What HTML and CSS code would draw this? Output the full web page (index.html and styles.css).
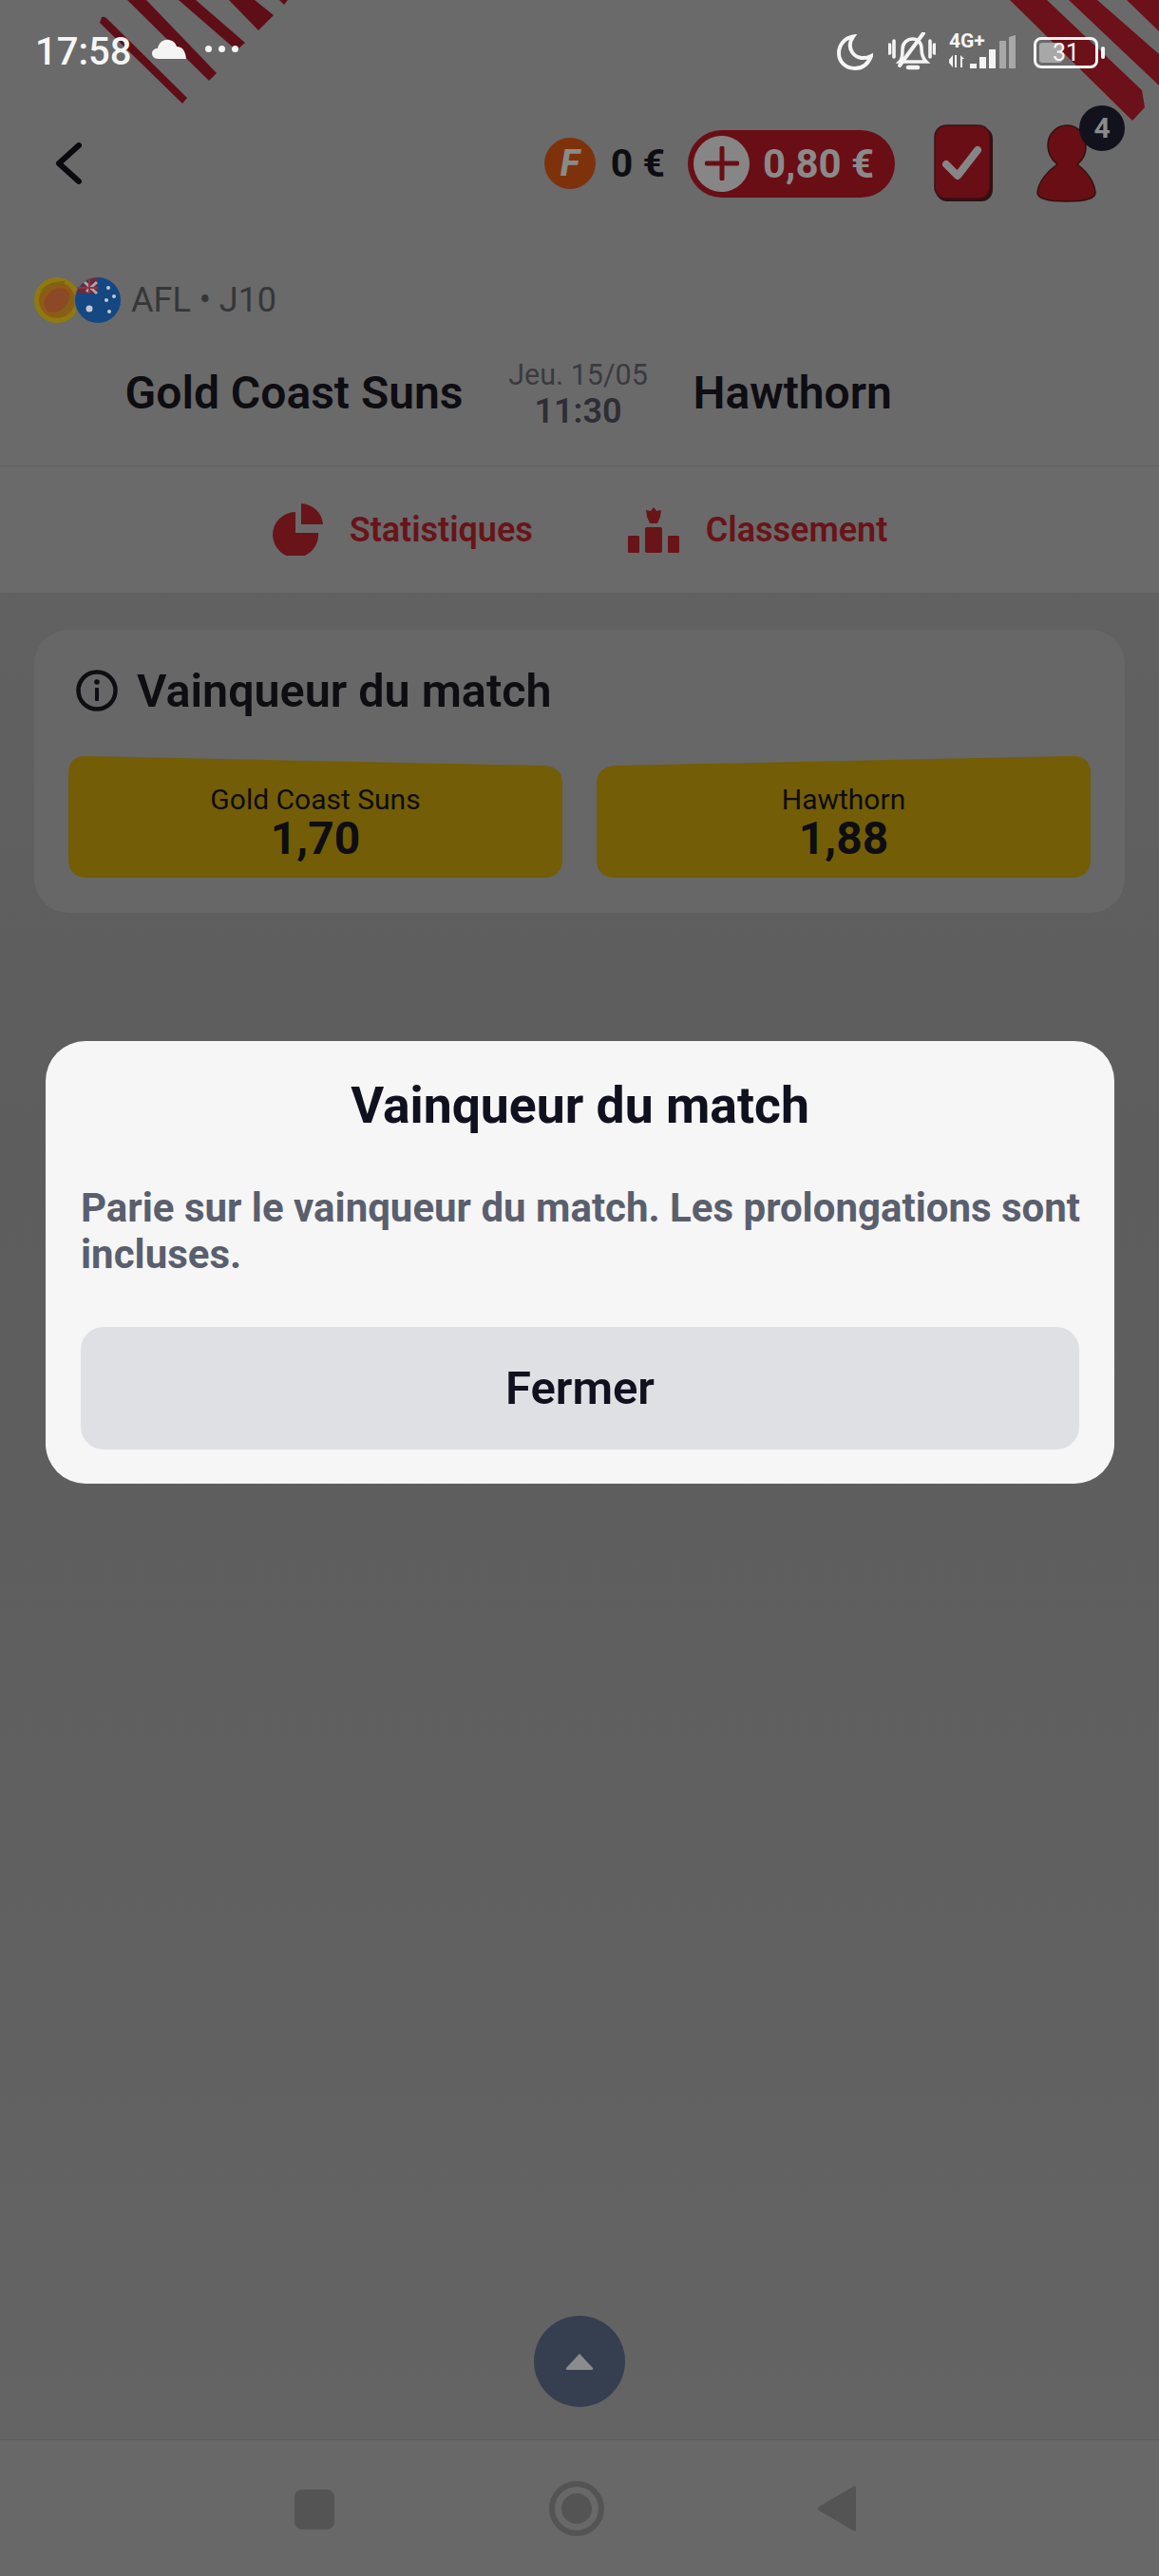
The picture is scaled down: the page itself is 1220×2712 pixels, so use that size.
FILE: index.html
```html
<!DOCTYPE html>
<html lang="fr">
<head>
<meta charset="utf-8">
<title>Gold Coast Suns - Hawthorn</title>
<link rel="stylesheet" href="styles.css">
</head>
<body>
<div class="screen">
  <!-- decorative corner ribbons behind the status bar -->
  <svg class="ribbons" width="1220" height="130" viewBox="0 0 1220 130">
    <g fill="#5e0e16">
      <path d="M107 18 Q110 17 113 20 L197 103 L192 109 L105 24 Z"/>
      <path d="M134 0H154L228 77L220 85Z"/>
      <path d="M188 0H206L258 45L249 53Z"/>
      <path d="M241 0H268L288 16L272 32Z"/>
      <path d="M294 0H303L299 5Z"/>
    </g>
    <g fill="#6c1019">
      <path d="M1063 0H1102L1202 95L1205 113L1192 127Z"/>
      <path d="M1125 0H1155L1220 57V90Z"/>
      <path d="M1186 0H1220V33Z"/>
    </g>
  </svg>

  <header class="status">
    <div class="status-left">
      <span class="clock">17:58</span>
      <svg class="cloud" width="36" height="22" viewBox="0 0 36 22"><path fill="#f4f4f4" d="M7 22C2 22 0 19 0 16C0 13 3 11 6 11C7 5 12 1 18 2C23 3 25 6 26 9C31 9 35 12 36 22Z"/></svg>
      <span class="dots"><i></i><i></i><i></i></span>
    </div>
    <div class="status-right">
      <svg class="moon" width="38" height="38" viewBox="0 0 38 38"><path fill="none" stroke="#f6f6f6" stroke-width="4" d="M17 2.5C8 4 2 11 2 20C2 29 9 36 19 36C27 36 33 31 36 23C28 27 20 25 16 19C13 14 13 8 17 2.5Z"/></svg>
      <svg class="bell" width="50" height="42" viewBox="0 0 50 42"><g fill="none" stroke="#f4f4f4" stroke-width="3.600" stroke-linecap="round"><path d="M1.500 13V22M6 9V26M44 9V26M48.500 13V22"/><path d="M13 30C15 27 15 22 15 18C15 11 20 7 26 7C31 7 35 11 35 17C35 23 36 27 40 31H12Z"/><path d="M37 1L12 35" stroke-width="4"/><path d="M21 37H31" stroke-width="4.500"/></g></svg>
      <div class="net">
        <span class="net-label">4G+</span>
        <svg width="74" height="36" viewBox="0 0 74 36" class="bars">
          <g fill="#f4f4f4">
            <path d="M0 26L4 21V34L0 29ZM6 21H8V34H6ZM12 21L16 25H14V34H12Z"/>
            <rect x="22" y="30" width="7" height="5"/>
            <rect x="32" y="23" width="7" height="12"/>
            <path d="M42 15H49V35H42Z"/>
          </g>
          <rect x="53" y="6" width="7" height="29" fill="#a8a8a8"/>
          <path d="M63 2L70 0V35H63Z" fill="#a8a8a8"/>
        </svg>
      </div>
      <div class="battery">
        <span class="battery-level"></span>
        <span class="battery-text">31</span>
      </div>
      <span class="battery-tip"></span>
    </div>
  </header>

  <div class="toolbar">
    <svg class="back" width="28" height="44" viewBox="0 0 28 44"><path d="M25 3L4 22L25 41" fill="none" stroke="#0a0a0e" stroke-width="6" stroke-linecap="round" stroke-linejoin="round"/></svg>
    <div class="wallet">
      <span class="coin">F</span>
      <span class="balance">0 €</span>
      <div class="topup">
        <span class="topup-plus"><svg width="36" height="36" viewBox="0 0 36 36"><path d="M18 2V34M2 18H34" stroke="#690e15" stroke-width="5" stroke-linecap="round"/></svg></span>
        <span class="topup-amount">0,80 €</span>
      </div>
      <svg class="bets" width="64" height="82" viewBox="0 0 64 82">
        <rect x="2" y="3" width="60" height="78" rx="12" fill="#2e1114"/>
        <rect x="1" y="1" width="58" height="77" rx="12" fill="#690e15" stroke="#3a1216" stroke-width="1.500"/>
        <path d="M13 42L25 54L46 27" fill="none" stroke="#868686" stroke-width="8" stroke-linecap="round" stroke-linejoin="round"/>
      </svg>
      <div class="account">
        <svg width="64" height="82" viewBox="0 0 64 82">
          <path fill="#690e15" stroke="#34110f" stroke-width="1.500" d="M32 1C21 1 12 10 12 22C12 32 17 38 22 42C12 49 2 60 1 72C1 78 14 81 32 81C50 81 62 78 62 72C61 60 52 49 43 42C48 38 53 31 52 20C51 9 43 1 32 1Z"/>
        </svg>
        <span class="badge">4</span>
      </div>
    </div>
  </div>

  <div class="league">
    <span class="league-flags">
      <svg width="92" height="48" viewBox="0 0 92 48">
        <circle cx="24" cy="24" r="24" fill="#8f7a0e"/>
        <circle cx="24" cy="24" r="19" fill="#8f5a18"/>
        <ellipse cx="24" cy="24" rx="15" ry="11" fill="#8d4826" transform="rotate(-40 24 24)"/>
        <path d="M8 14Q20 6 32 5M40 18Q36 34 22 41" fill="none" stroke="#7a6614" stroke-width="3"/>
        <circle cx="67" cy="24" r="25" fill="#6a6a6a"/>
        <circle cx="67" cy="24" r="24" fill="#154782"/>
        <path d="M45 17H67V0Q50 2 45 17Z" fill="#6d2a3c"/>
        <path d="M53 5L66 17M66 5L55 15" stroke="#a7a7b0" stroke-width="3"/>
        <path d="M45 11H67M58 1V17" stroke="#8a3a40" stroke-width="2"/>
        <g fill="#c4c7d0"><circle cx="58" cy="33" r="3.500"/><circle cx="78" cy="11" r="2"/><circle cx="84" cy="20" r="2"/><circle cx="76" cy="24" r="2"/><circle cx="79" cy="36" r="2"/></g>
      </svg>
    </span>
    <span class="league-name">AFL • J10</span>
  </div>

  <div class="teams">
    <span class="team team-home">Gold Coast Suns</span>
    <div class="kickoff">
      <span class="kickoff-date">Jeu. 15/05</span>
      <span class="kickoff-time">11:30</span>
    </div>
    <span class="team">Hawthorn</span>
  </div>

  <nav class="tabs">
    <a class="tab">
      <svg width="54" height="55" viewBox="0 0 54 55"><path fill="#681419" d="M25 31V9A24 24 0 1 0 49 31Z"/><path fill="#681419" d="M31 0C44 1 53 10 54 22H31Z"/></svg>
      <span>Statistiques</span>
    </a>
    <a class="tab">
      <svg width="54" height="48" viewBox="0 0 54 48"><g fill="#681419"><path d="M27 0L30 4L35 3L34 10L31 17H23L20 10L19 3L24 4Z"/><rect x="18" y="21" width="18" height="27" rx="2"/><rect x="0" y="30" width="12" height="18" rx="1"/><rect x="42" y="30" width="12" height="18" rx="1"/></g></svg>
      <span>Classement</span>
    </a>
  </nav>

  <main class="content">
    <section class="market">
      <h2 class="market-title">
        <svg width="44" height="44" viewBox="0 0 44 44"><circle cx="22" cy="22" r="19.500" fill="none" stroke="#0d0d12" stroke-width="4.500"/><circle cx="22" cy="13" r="2.800" fill="#0d0d12"/><rect x="20" y="19" width="4" height="14" rx="1" fill="#0d0d12"/></svg>
        <span>Vainqueur du match</span>
      </h2>
      <div class="odds">
        <div class="odd odd-home"><span class="odd-label">Gold Coast Suns</span><span class="odd-value">1,70</span></div>
        <div class="odd odd-away"><span class="odd-label">Hawthorn</span><span class="odd-value">1,88</span></div>
      </div>
    </section>
  </main>

  <div class="scroll-top"><svg width="30" height="18" viewBox="0 0 30 18"><path fill="#8c8c8c" d="M15 1L29 16Q30 18 27 18H3Q0 18 1 16Z"/></svg></div>

  <footer class="sysnav">
    <span class="sys-square"></span>
    <span class="sys-home"></span>
    <svg class="sys-back" width="40" height="48" viewBox="0 0 40 48"><path fill="#545454" d="M40 2V46Q40 49 37 47L1 26Q-1 24 1 22L37 1Q40 -1 40 2Z"/></svg>
  </footer>

  <div class="modal">
    <h3 class="modal-title">Vainqueur du match</h3>
    <p class="modal-text">Parie sur le vainqueur du match. Les prolongations sont incluses.</p>
    <button class="modal-close">Fermer</button>
  </div>
</div>
</body>
</html>
```
FILE: styles.css
```css
* { box-sizing: border-box; }

html, body { margin: 0; padding: 0; }

body {
  font-family: "Roboto", "Liberation Sans", sans-serif;
  color: #0d0d12;
  background: #5e5e5e;
}

.screen {
  position: relative;
  display: flex;
  flex-direction: column;
  width: 1220px;
  height: 2712px;
  overflow: hidden;
  background: #6a6a6a;
}

.ribbons {
  position: absolute;
  top: 0;
  left: 0;
}

/* status bar */
.status {
  position: relative;
  display: flex;
  justify-content: space-between;
  align-items: center;
  height: 110px;
  padding: 0 57px 0 37px;
  color: #f6f6f6;
}

.status-left,
.status-right {
  display: flex;
  align-items: center;
}

.clock {
  font-size: 40px;
  font-weight: 500;
  line-height: 46px;
}

.cloud { margin: -8px 0 0 22px; }

.dots {
  display: flex;
  gap: 7px;
  margin: -7px 0 0 20px;
}

.dots i {
  width: 7px;
  height: 7px;
  border-radius: 50%;
  background: #f6f6f6;
}

.moon { margin-right: 16px; }

.bell { margin-right: 14px; }

.net {
  position: relative;
  width: 74px;
  height: 38px;
  margin-right: 15px;
}

.net-label {
  position: absolute;
  top: -3px;
  left: 0;
  font-size: 21px;
  font-weight: 700;
  line-height: 20px;
}

.bars {
  position: absolute;
  top: 1px;
  left: 0;
}

.battery {
  position: relative;
  display: flex;
  justify-content: center;
  align-items: center;
  width: 68px;
  height: 33px;
  border: 3px solid #f4f4f4;
  border-radius: 8px;
}

.battery-level {
  position: absolute;
  top: 3px;
  bottom: 3px;
  left: 3px;
  width: 24px;
  border-radius: 3px;
  background: #a8a8a8;
}

.battery-text {
  position: relative;
  font-size: 25px;
  line-height: 27px;
}

.battery-tip {
  width: 4px;
  height: 13px;
  margin-left: 3px;
  border-radius: 2px;
  background: #f4f4f4;
}

/* top toolbar */
.toolbar {
  position: relative;
  display: flex;
  justify-content: space-between;
  align-items: center;
  height: 124px;
  padding: 0 65px 0 58px;
}

.wallet {
  display: flex;
  align-items: center;
}

.coin {
  width: 54px;
  height: 54px;
  border-radius: 50%;
  background: #7e320c;
  color: #8a8a8a;
  font-size: 38px;
  font-style: italic;
  font-weight: 800;
  line-height: 54px;
  text-align: center;
}

.balance {
  margin: 0 24px 0 16px;
  font-size: 41px;
  font-weight: 700;
}

.topup {
  display: flex;
  align-items: center;
  width: 218px;
  height: 71px;
  padding-left: 6px;
  border-radius: 36px;
  background: #690e15;
}

.topup-plus {
  display: flex;
  justify-content: center;
  align-items: center;
  width: 59px;
  height: 59px;
  border-radius: 50%;
  background: #868686;
}

.topup-amount {
  margin-left: 14px;
  color: #8a8a8a;
  font-size: 42px;
  font-weight: 700;
}

.bets { margin-left: 41px; }

.account {
  position: relative;
  height: 82px;
  margin-left: 44px;
}

.badge {
  position: absolute;
  top: -20px;
  right: -29px;
  width: 48px;
  height: 48px;
  border-radius: 50%;
  background: #11121c;
  color: #8a8a8a;
  font-size: 30px;
  font-weight: 700;
  line-height: 48px;
  text-align: center;
}

/* match header */
.league {
  display: flex;
  align-items: center;
  gap: 10px;
  height: 48px;
  margin-top: 58px;
  padding-left: 36px;
}

.league-flags { display: flex; }

.league-name {
  color: #363639;
  font-size: 36px;
}

.teams {
  display: grid;
  grid-template-columns: 1fr auto 1fr;
  gap: 49px;
  align-items: center;
  height: 76px;
  margin-top: 36px;
  padding-right: 3px;
}

.team {
  color: #0d0d12;
  font-size: 48px;
  font-weight: 600;
  line-height: 56px;
}

.team-home { text-align: right; }

.kickoff {
  display: flex;
  flex-direction: column;
  align-items: center;
  width: 144px;
  white-space: nowrap;
}

.kickoff-date {
  color: #3a3a40;
  font-size: 30.500px;
  line-height: 38px;
}

.kickoff-time {
  color: #2e2e36;
  font-size: 36px;
  font-weight: 600;
  line-height: 38px;
}

.tabs {
  display: flex;
  justify-content: center;
  gap: 100px;
  align-items: center;
  height: 134px;
  margin-top: 38px;
  border-top: 1px solid #606060;
}

.tab {
  display: flex;
  align-items: center;
  gap: 28px;
  color: #681419;
  font-size: 36px;
  font-weight: 600;
}

/* markets list */
.content {
  flex: 1;
  padding: 39px 36px 0;
  background: linear-gradient(#616161, #5d5d5d 30%, #5f5f5f 60%, #646464);
}

.market {
  height: 298px;
  padding: 42px 36px 0 44px;
  border-radius: 36px;
  background: #676767;
}

.market-title {
  display: flex;
  align-items: center;
  gap: 20px;
  height: 44px;
  margin: 0;
  font-size: 48.500px;
  font-weight: 600;
}

.odds {
  display: flex;
  gap: 36px;
  margin: 46px 0 0 -8px;
}

.odd {
  display: flex;
  flex-direction: column;
  align-items: center;
  width: 520px;
  height: 129px;
  padding-top: 30px;
  background: #735d06;
}

/* slanted top edges with rounded corners */
.odd-home {
  clip-path: path("M0 20Q0 0 20 1L500 11Q520 12 520 30V109Q520 129 500 129H20Q0 129 0 109Z");
}

.odd-away {
  clip-path: path("M0 30Q0 12 20 11L500 1Q520 0 520 20V109Q520 129 500 129H20Q0 129 0 109Z");
}

.odd-label {
  font-size: 30px;
  line-height: 34px;
}

.odd-value {
  font-size: 48px;
  font-weight: 700;
  line-height: 48px;
}

/* floating scroll button */
.scroll-top {
  position: absolute;
  top: 2438px;
  left: 562px;
  display: flex;
  justify-content: center;
  align-items: center;
  width: 96px;
  height: 96px;
  border-radius: 50%;
  background: #363f50;
}

/* system navigation */
.sysnav {
  position: relative;
  flex: none;
  height: 144px;
  border-top: 1px solid #5c5c5c;
  background: #686868;
}

.sysnav > * { position: absolute; }

.sys-square {
  top: 52px;
  left: 310px;
  width: 42px;
  height: 42px;
  border-radius: 8px;
  background: #545454;
}

.sys-home {
  top: 43px;
  left: 578px;
  width: 58px;
  height: 58px;
  border: 6px solid #545454;
  border-radius: 50%;
}

.sys-home::after {
  content: "";
  position: absolute;
  top: 7px;
  left: 7px;
  width: 32px;
  height: 32px;
  border-radius: 50%;
  background: #545454;
}

.sys-back {
  top: 48px;
  left: 861px;
}

/* info dialog */
.modal {
  position: absolute;
  top: 1096px;
  left: 48px;
  width: 1125px;
  height: 466px;
  padding: 35px 37px 0;
  border-radius: 42px;
  background: #f6f6f6;
}

.modal-title {
  margin: 0;
  color: #10111f;
  font-size: 53.500px;
  font-weight: 700;
  line-height: 66px;
  text-align: center;
}

.modal-text {
  margin: 50px -6px 0 0;
  color: #5a5f6e;
  font-size: 42px;
  font-weight: 700;
  line-height: 49px;
}

.modal-close {
  display: block;
  width: 100%;
  height: 129px;
  margin-top: 52px;
  border: 0;
  border-radius: 24px;
  background: #dfe0e4;
  color: #10111f;
  font-family: inherit;
  font-size: 49px;
  font-weight: 600;
}
```
